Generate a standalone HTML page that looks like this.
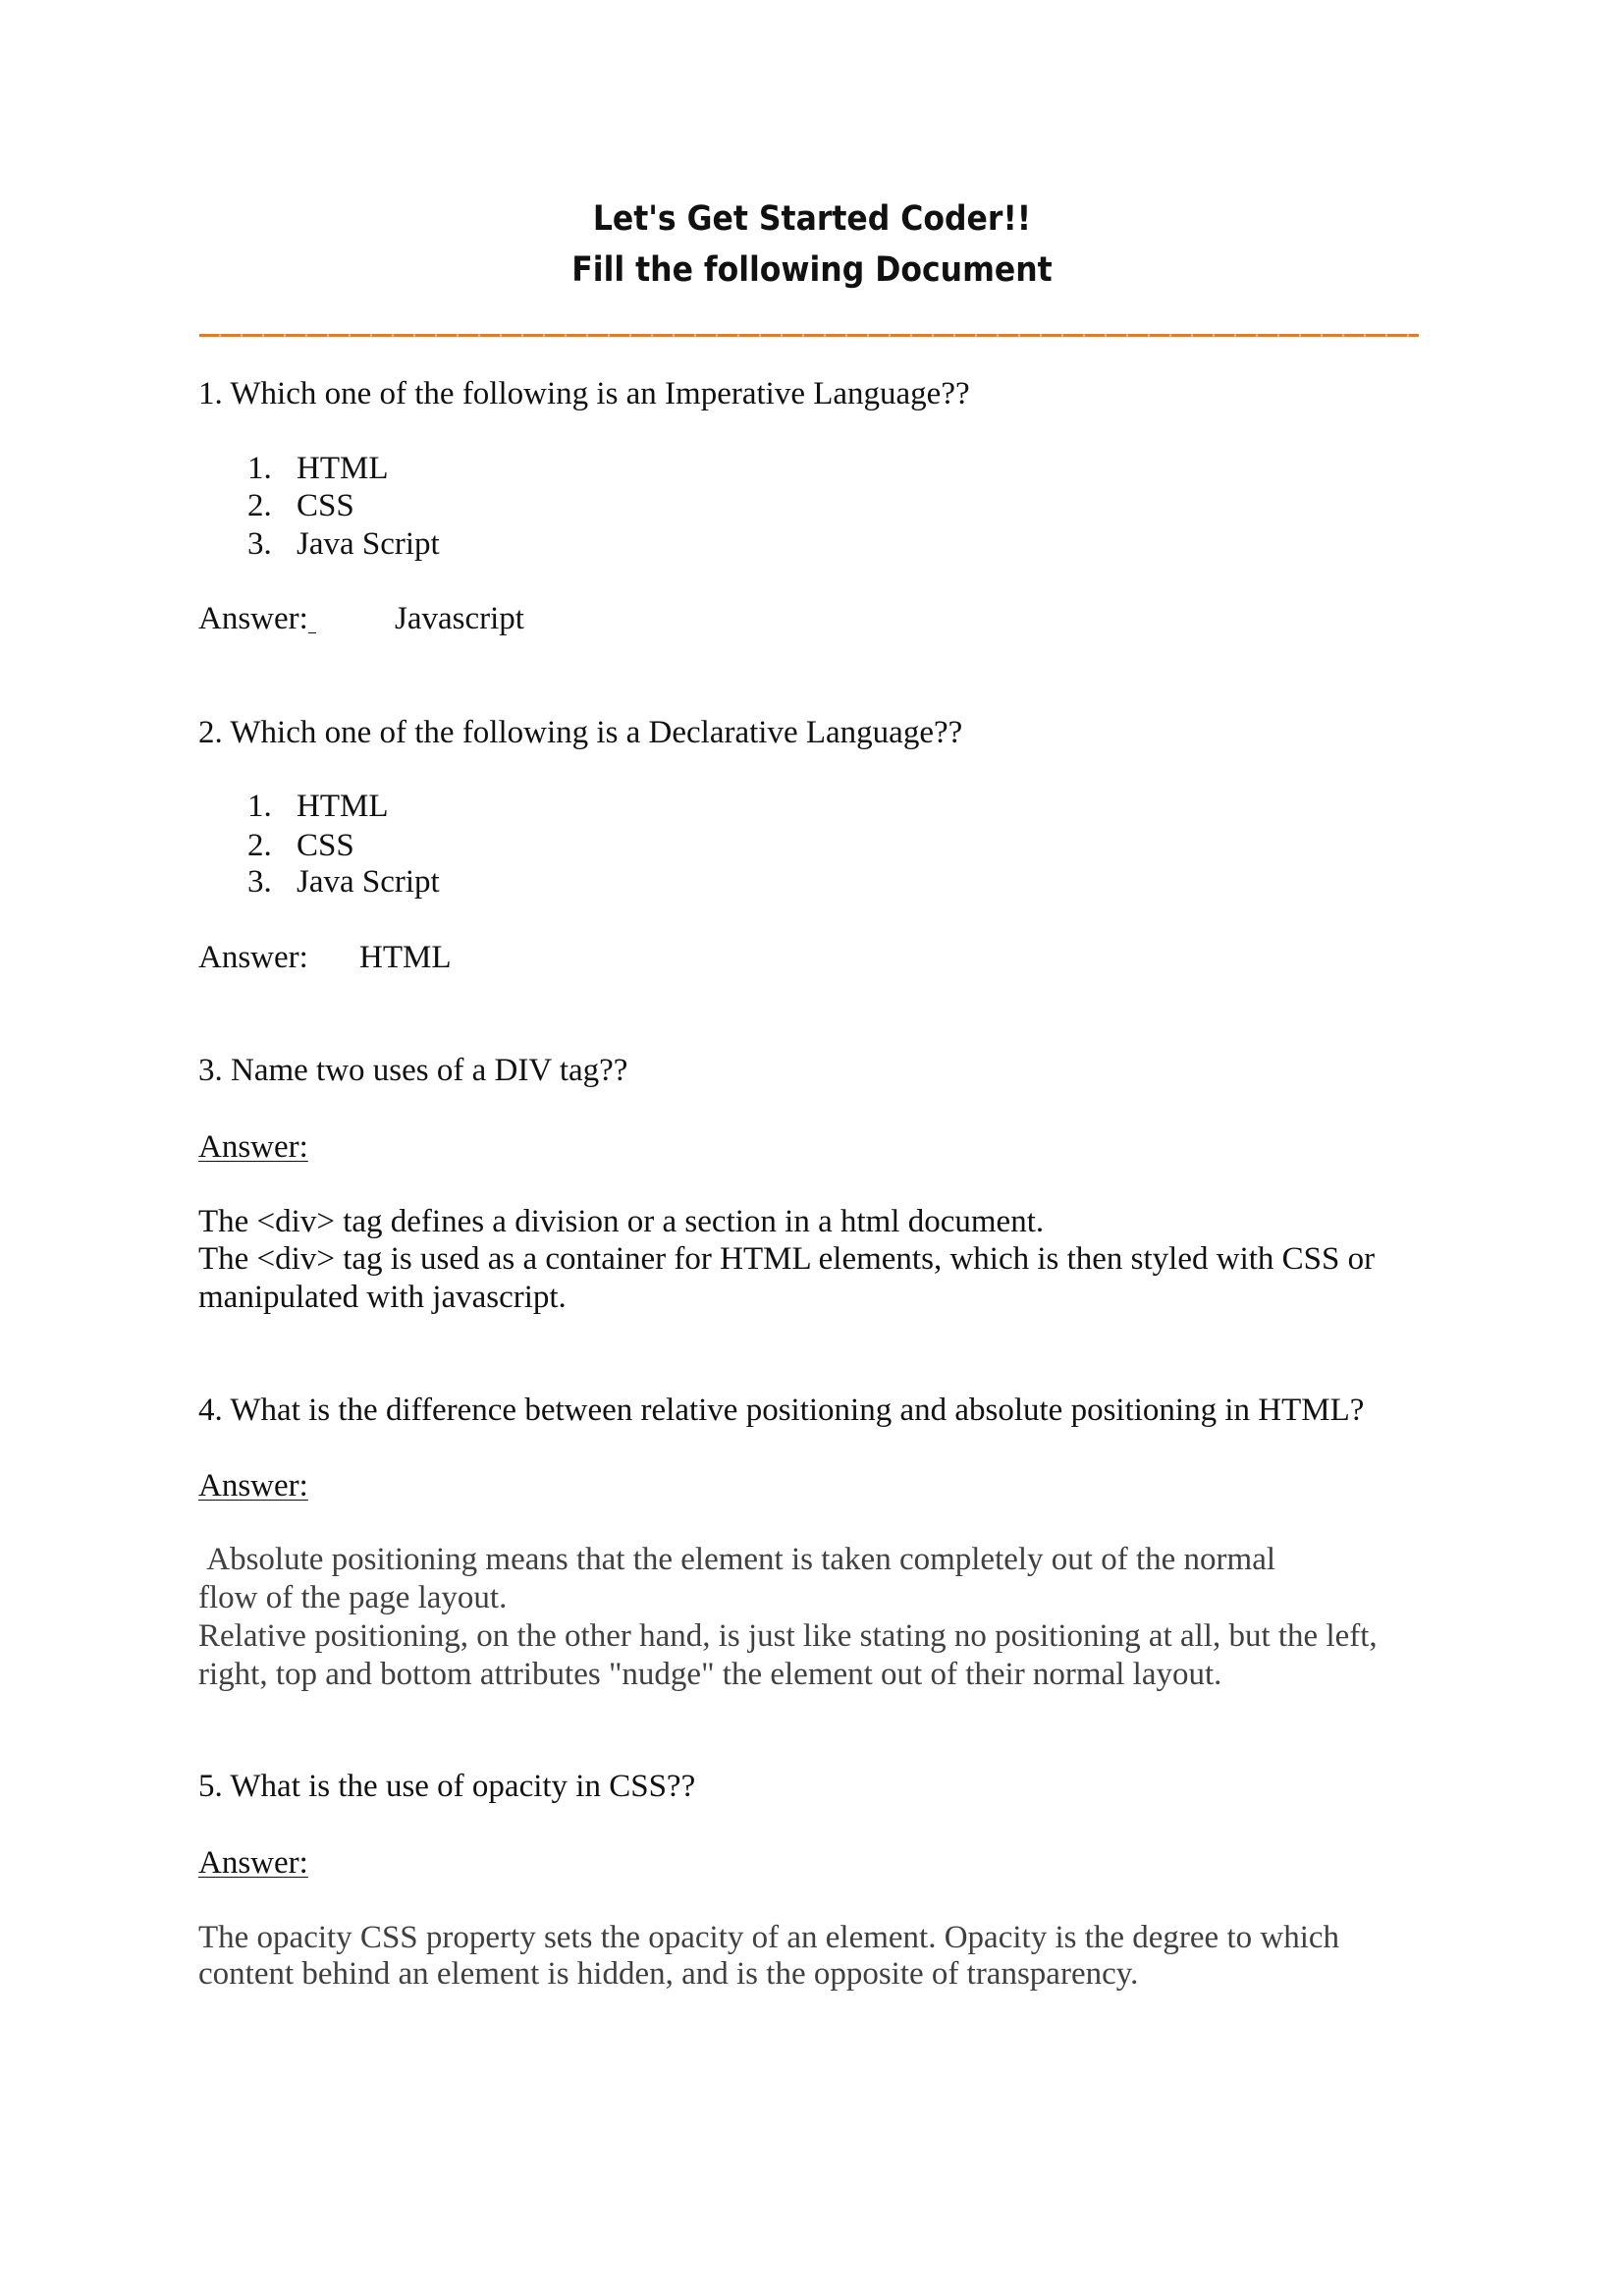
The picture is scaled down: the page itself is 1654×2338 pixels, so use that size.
<!DOCTYPE html>
<html><head><meta charset="utf-8"><style>
body{margin:0;background:#fff;}
.p{position:relative;width:1654px;height:2338px;overflow:hidden;}
.t{position:absolute;left:0;width:1654px;text-align:center;font-family:"DejaVu Sans Condensed","DejaVu Sans","Liberation Sans",sans-serif;font-weight:bold;font-size:35px;line-height:44px;color:#111;}
.l{position:absolute;font-family:"Liberation Serif",serif;font-size:33px;line-height:38px;color:#111;white-space:nowrap;}
.g{color:#404040;}
.u{text-decoration:underline;text-underline-offset:4px;text-decoration-thickness:1px;}
.hr{position:absolute;left:203px;top:340px;width:1242px;height:3px;background:repeating-linear-gradient(90deg,#e07b30 0 20px,#f0b080 20px 22px);}
</style></head><body><div class="p">
<div class="t" style="top:201px">Let's Get Started Coder!!</div>
<div class="t" style="top:253px">Fill the following Document</div>
<div class="hr"></div>

<div class="l" style="left:202px;top:382px">1. Which one of the following is an Imperative Language??</div>
<div class="l" style="left:252px;top:458px">1.</div><div class="l" style="left:302px;top:458px">HTML</div>
<div class="l" style="left:252px;top:496px">2.</div><div class="l" style="left:302px;top:496px">CSS</div>
<div class="l" style="left:252px;top:535px">3.</div><div class="l" style="left:302px;top:535px">Java Script</div>
<div class="l" style="left:202px;top:611px">Answer:<span class="u">&nbsp;</span></div><div class="l" style="left:402px;top:611px">Javascript</div>

<div class="l" style="left:202px;top:727px">2. Which one of the following is a Declarative Language??</div>
<div class="l" style="left:252px;top:802px">1.</div><div class="l" style="left:302px;top:802px">HTML</div>
<div class="l" style="left:252px;top:842px">2.</div><div class="l" style="left:302px;top:842px">CSS</div>
<div class="l" style="left:252px;top:879px">3.</div><div class="l" style="left:302px;top:879px">Java Script</div>
<div class="l" style="left:202px;top:956px">Answer:</div><div class="l" style="left:366px;top:956px">HTML</div>

<div class="l" style="left:202px;top:1071px">3. Name two uses of a DIV tag??</div>
<div class="l u" style="left:202px;top:1149px">Answer:</div>
<div class="l" style="left:202px;top:1225px">The &lt;div&gt; tag defines a division or a section in a html document.</div>
<div class="l" style="left:202px;top:1263px">The &lt;div&gt; tag is used as a container for HTML elements, which is then styled with CSS or</div>
<div class="l" style="left:202px;top:1302px">manipulated with javascript.</div>

<div class="l" style="left:202px;top:1417px">4. What is the difference between relative positioning and absolute positioning in HTML?</div>
<div class="l u" style="left:202px;top:1494px">Answer:</div>
<div class="l g" style="left:202px;top:1569px">&nbsp;Absolute positioning means that the element is taken completely out of the normal</div>
<div class="l g" style="left:202px;top:1608px">flow of the page layout.</div>
<div class="l g" style="left:202px;top:1647px">Relative positioning, on the other hand, is just like stating no positioning at all, but the left,</div>
<div class="l g" style="left:202px;top:1686px">right, top and bottom attributes "nudge" the element out of their normal layout.</div>

<div class="l" style="left:202px;top:1800px">5. What is the use of opacity in CSS??</div>
<div class="l u" style="left:202px;top:1878px">Answer:</div>
<div class="l g" style="left:202px;top:1954px">The opacity CSS property sets the opacity of an element. Opacity is the degree to which</div>
<div class="l g" style="left:202px;top:1991px">content behind an element is hidden, and is the opposite of transparency.</div>
</div></body></html>
